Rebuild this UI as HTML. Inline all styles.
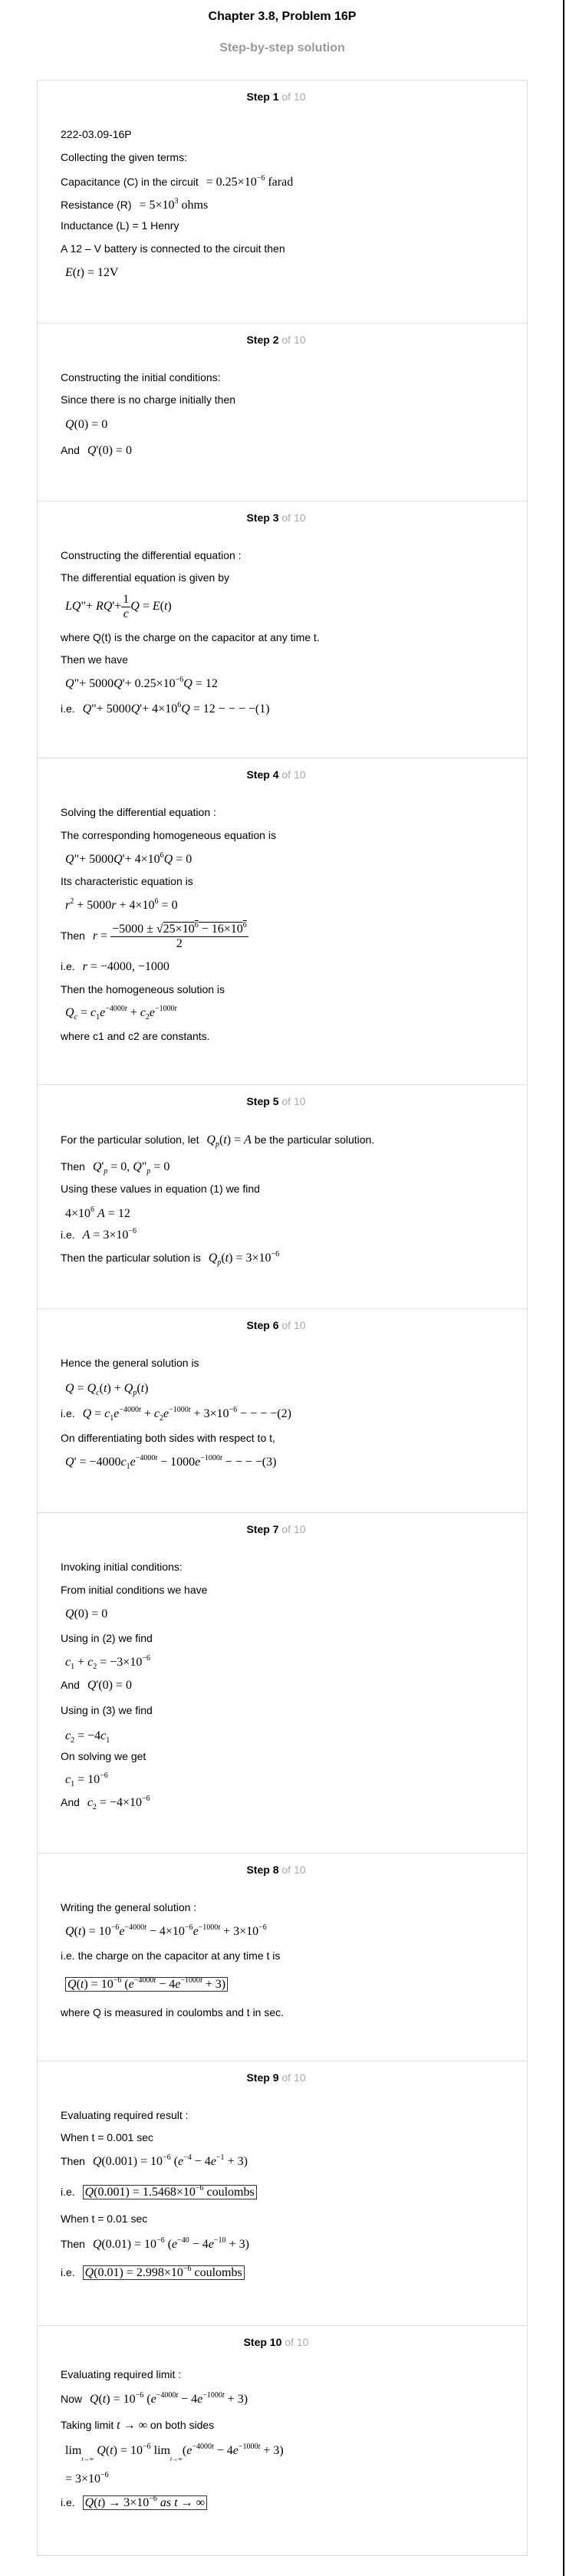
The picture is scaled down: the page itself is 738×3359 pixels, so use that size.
<!DOCTYPE html>
<html><head><meta charset="utf-8">
<style>
html,body{margin:0;padding:0;background:#fff;}
body{width:738px;height:3359px;position:relative;overflow:hidden;font-family:"Liberation Sans",Arial,sans-serif;color:#000;}
.vr{position:absolute;left:734px;top:0;width:2px;height:3359px;background:#000;}
.h1{position:absolute;left:0;width:736px;text-align:center;font-weight:bold;font-size:16px;line-height:20px;}
.box{position:absolute;left:48px;top:104px;width:638px;height:3227px;border:1px solid #ddd;}
.sep{position:absolute;left:48px;width:640px;height:1px;background:#ddd;}
.st{position:absolute;left:48px;width:624px;text-align:center;font-size:14px;font-weight:bold;line-height:18px;}
.st span{font-weight:normal;color:#aaa;}
.l{position:absolute;left:79px;font-size:14px;line-height:20px;white-space:nowrap;}
.m{font-family:"Liberation Serif","Times New Roman",serif;font-size:16px;margin-left:6px;}
.m i{font-style:italic;}
sup{font-size:10px;vertical-align:7px;line-height:0;}
sub{font-size:10px;vertical-align:-4px;line-height:0;}
.bx{border:1px solid #333;padding:0 2px;}
.fr{display:inline-block;vertical-align:middle;text-align:center;}
.fr .n{display:block;border-bottom:1px solid #000;padding:0 2px;line-height:18px;}
.fr .d{display:block;line-height:18px;}
.big{font-size:20px;}
</style></head><body>
<div class="vr"></div>
<div class="h1" style="top:12px">Chapter 3.8, Problem 16P</div>
<div class="h1" style="top:53px;color:#999">Step-by-step solution</div>
<div class="box"></div>

<div class="st" style="top:117px">Step 1 <span>of 10</span></div>
<div class="l" style="top:165px">222-03.09-16P</div>
<div class="l" style="top:195px">Collecting the given terms:</div>
<div class="l" style="top:227px">Capacitance (C) in the circuit <span class="m">= 0.25×10<sup>−6</sup> farad</span></div>
<div class="l" style="top:257px">Resistance (R) <span class="m">= 5×10<sup>3</sup> ohms</span></div>
<div class="l" style="top:284px">Inductance (L) = 1 Henry</div>
<div class="l" style="top:314px">A 12 – V battery is connected to the circuit then</div>
<div class="l" style="top:345px"><span class="m"><i>E</i>(<i>t</i>) = 12V</span></div>

<div class="sep" style="top:421px"></div>
<div class="st" style="top:434px">Step 2 <span>of 10</span></div>
<div class="l" style="top:482px">Constructing the initial conditions:</div>
<div class="l" style="top:511px">Since there is no charge initially then</div>
<div class="l" style="top:543px"><span class="m"><i>Q</i>(0) = 0</span></div>
<div class="l" style="top:577px">And <span class="m"><i>Q</i>'(0) = 0</span></div>

<div class="sep" style="top:653px"></div>
<div class="st" style="top:666px">Step 3 <span>of 10</span></div>
<div class="l" style="top:714px">Constructing the differential equation :</div>
<div class="l" style="top:743px">The differential equation is given by</div>
<div class="l" style="top:772px;line-height:36px"><span class="m"><i>LQ</i>"+ <i>RQ</i>'+<span class="fr"><span class="n">1</span><span class="d"><i>c</i></span></span><i>Q</i> = <i>E</i>(<i>t</i>)</span></div>
<div class="l" style="top:821px">where Q(t) is the charge on the capacitor at any time t.</div>
<div class="l" style="top:850px">Then we have</div>
<div class="l" style="top:881px"><span class="m"><i>Q</i>"+ 5000<i>Q</i>'+ 0.25×10<sup>−6</sup><i>Q</i> = 12</span></div>
<div class="l" style="top:914px">i.e. <span class="m"><i>Q</i>"+ 5000<i>Q</i>'+ 4×10<sup>6</sup><i>Q</i> = 12 − − − −(1)</span></div>

<div class="sep" style="top:988px"></div>
<div class="st" style="top:1001px">Step 4 <span>of 10</span></div>
<div class="l" style="top:1049px">Solving the differential equation :</div>
<div class="l" style="top:1079px">The corresponding homogeneous equation is</div>
<div class="l" style="top:1110px"><span class="m"><i>Q</i>"+ 5000<i>Q</i>'+ 4×10<sup>6</sup><i>Q</i> = 0</span></div>
<div class="l" style="top:1139px">Its characteristic equation is</div>
<div class="l" style="top:1170px"><span class="m"><i>r</i><sup>2</sup> + 5000<i>r</i> + 4×10<sup>6</sup> = 0</span></div>
<div class="l" style="top:1201px;line-height:38px">Then <span class="m"><i>r</i> = <span class="fr"><span class="n">−5000 ± √<span style="text-decoration:overline">25×10<sup>6</sup> − 16×10<sup>6</sup></span></span><span class="d">2</span></span></span></div>
<div class="l" style="top:1250px">i.e. <span class="m"><i>r</i> = −4000, −1000</span></div>
<div class="l" style="top:1280px">Then the homogeneous solution is</div>
<div class="l" style="top:1310px"><span class="m"><i>Q<sub>c</sub></i> = <i>c</i><sub>1</sub><i>e</i><sup>−4000<i>t</i></sup> + <i>c</i><sub>2</sub><i>e</i><sup>−1000<i>t</i></sup></span></div>
<div class="l" style="top:1341px">where c1 and c2 are constants.</div>

<div class="sep" style="top:1414px"></div>
<div class="st" style="top:1427px">Step 5 <span>of 10</span></div>
<div class="l" style="top:1476px">For the particular solution, let <span class="m"><i>Q<sub>p</sub></i>(<i>t</i>) = <i>A</i></span> be the particular solution.</div>
<div class="l" style="top:1511px">Then <span class="m"><i>Q</i>'<sub><i>p</i></sub> = 0, <i>Q</i>"<sub><i>p</i></sub> = 0</span></div>
<div class="l" style="top:1540px">Using these values in equation (1) we find</div>
<div class="l" style="top:1572px"><span class="m">4×10<sup>6</sup> <i>A</i> = 12</span></div>
<div class="l" style="top:1600px">i.e. <span class="m"><i>A</i> = 3×10<sup>−6</sup></span></div>
<div class="l" style="top:1630px">Then the particular solution is <span class="m"><i>Q<sub>p</sub></i>(<i>t</i>) = 3×10<sup>−6</sup></span></div>

<div class="sep" style="top:1706px"></div>
<div class="st" style="top:1719px">Step 6 <span>of 10</span></div>
<div class="l" style="top:1767px">Hence the general solution is</div>
<div class="l" style="top:1800px"><span class="m"><i>Q</i> = <i>Q<sub>c</sub></i>(<i>t</i>) + <i>Q<sub>p</sub></i>(<i>t</i>)</span></div>
<div class="l" style="top:1833px">i.e. <span class="m"><i>Q</i> = <i>c</i><sub>1</sub><i>e</i><sup>−4000<i>t</i></sup> + <i>c</i><sub>2</sub><i>e</i><sup>−1000<i>t</i></sup> + 3×10<sup>−6</sup> − − − −(2)</span></div>
<div class="l" style="top:1865px">On differentiating both sides with respect to t,</div>
<div class="l" style="top:1896px"><span class="m"><i>Q</i>' = −4000<i>c</i><sub>1</sub><i>e</i><sup>−4000<i>t</i></sup> − 1000<i>e</i><sup>−1000<i>t</i></sup> − − − −(3)</span></div>

<div class="sep" style="top:1972px"></div>
<div class="st" style="top:1985px">Step 7 <span>of 10</span></div>
<div class="l" style="top:2033px">Invoking initial conditions:</div>
<div class="l" style="top:2063px">From initial conditions we have</div>
<div class="l" style="top:2094px"><span class="m"><i>Q</i>(0) = 0</span></div>
<div class="l" style="top:2126px">Using in (2) we find</div>
<div class="l" style="top:2157px"><span class="m"><i>c</i><sub>1</sub> + <i>c</i><sub>2</sub> = −3×10<sup>−6</sup></span></div>
<div class="l" style="top:2187px">And <span class="m"><i>Q</i>'(0) = 0</span></div>
<div class="l" style="top:2220px">Using in (3) we find</div>
<div class="l" style="top:2253px"><span class="m"><i>c</i><sub>2</sub> = −4<i>c</i><sub>1</sub></span></div>
<div class="l" style="top:2280px">On solving we get</div>
<div class="l" style="top:2310px"><span class="m"><i>c</i><sub>1</sub> = 10<sup>−6</sup></span></div>
<div class="l" style="top:2340px">And <span class="m"><i>c</i><sub>2</sub> = −4×10<sup>−6</sup></span></div>

<div class="sep" style="top:2416px"></div>
<div class="st" style="top:2429px">Step 8 <span>of 10</span></div>
<div class="l" style="top:2477px">Writing the general solution :</div>
<div class="l" style="top:2508px"><span class="m"><i>Q</i>(<i>t</i>) = 10<sup>−6</sup><i>e</i><sup>−4000<i>t</i></sup> − 4×10<sup>−6</sup><i>e</i><sup>−1000<i>t</i></sup> + 3×10<sup>−6</sup></span></div>
<div class="l" style="top:2540px">i.e. the charge on the capacitor at any time t is</div>
<div class="l" style="top:2575px;line-height:24px"><span class="m bx"><i>Q</i>(<i>t</i>) = 10<sup>−6</sup> (<i>e</i><sup>−4000<i>t</i></sup> − 4<i>e</i><sup>−1000<i>t</i></sup> + 3)</span></div>
<div class="l" style="top:2614px">where Q is measured in coulombs and t in sec.</div>

<div class="sep" style="top:2687px"></div>
<div class="st" style="top:2700px">Step 9 <span>of 10</span></div>
<div class="l" style="top:2748px">Evaluating required result :</div>
<div class="l" style="top:2777px">When t = 0.001 sec</div>
<div class="l" style="top:2808px">Then <span class="m"><i>Q</i>(0.001) = 10<sup>−6</sup> (<i>e</i><sup>−4</sup> − 4<i>e</i><sup>−1</sup> + 3)</span></div>
<div class="l" style="top:2846px;line-height:24px">i.e. <span class="m bx"><i>Q</i>(0.001) = 1.5468×10<sup>−6</sup> coulombs</span></div>
<div class="l" style="top:2883px">When t = 0.01 sec</div>
<div class="l" style="top:2916px">Then <span class="m"><i>Q</i>(0.01) = 10<sup>−6</sup> (<i>e</i><sup>−40</sup> − 4<i>e</i><sup>−10</sup> + 3)</span></div>
<div class="l" style="top:2951px;line-height:24px">i.e. <span class="m bx"><i>Q</i>(0.01) = 2.998×10<sup>−6</sup> coulombs</span></div>

<div class="sep" style="top:3032px"></div>
<div class="st" style="top:3045px">Step 10 <span>of 10</span></div>
<div class="l" style="top:3086px">Evaluating required limit :</div>
<div class="l" style="top:3118px">Now <span class="m"><i>Q</i>(<i>t</i>) = 10<sup>−6</sup> (<i>e</i><sup>−4000<i>t</i></sup> − 4<i>e</i><sup>−1000<i>t</i></sup> + 3)</span></div>
<div class="l" style="top:3152px">Taking limit <span class="m" style="margin:0"><i>t</i> → ∞</span> on both sides</div>
<div class="l" style="top:3185px"><span class="m">lim<sub style="font-size:8px;vertical-align:-9px"><i>t</i>→∞</sub> <i>Q</i>(<i>t</i>) = 10<sup>−6</sup> lim<sub style="font-size:8px;vertical-align:-9px"><i>t</i>→∞</sub>(<i>e</i><sup>−4000<i>t</i></sup> − 4<i>e</i><sup>−1000<i>t</i></sup> + 3)</span></div>
<div class="l" style="top:3222px"><span class="m">= 3×10<sup>−6</sup></span></div>
<div class="l" style="top:3251px;line-height:24px">i.e. <span class="m bx"><i>Q</i>(<i>t</i>) → 3×10<sup>−6</sup> <i>as t</i> → ∞</span></div>
</body></html>
